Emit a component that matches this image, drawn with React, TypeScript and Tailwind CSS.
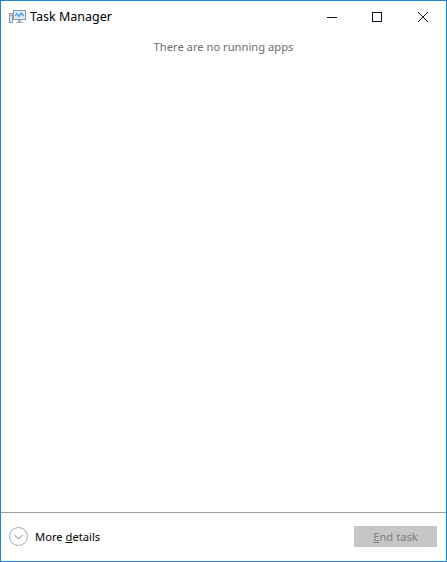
export default function App() {
  return (
    <div className="w-[447px] h-[562px] flex flex-col bg-white border border-[#1a85d6] font-['Noto_Sans',sans-serif] overflow-hidden">
      <div className="h-[30px] flex items-center shrink-0 pt-[2px]">
        <svg className="ml-[8px] w-[17px] h-[16px]" viewBox="0 0 17 16">
          <rect x="0.5" y="4.5" width="3" height="9" fill="#e4e6e8" stroke="#8f969c" />
          <rect x="1.5" y="6" width="1" height="1" fill="#c0504d" />
          <rect x="4.5" y="1.5" width="12" height="9" fill="#d9ecfa" stroke="#8d99a3" />
          <path d="M6 7 L8 4.5 L10 7.5 L12 4 L15 7" fill="none" stroke="#4f9fe0" strokeWidth="1.2" />
          <path d="M9 11 h3 v2 h2 v1 h-7 v-1 h2z" fill="#a3adb5" />
        </svg>
        <span className="ml-[4px] text-[12.5px] text-black">Task Manager</span>
        <div className="ml-auto flex items-center mr-[15px]">
          <svg className="w-[16px] h-[16px]" viewBox="0 0 16 16"><path d="M3 8.5h10" stroke="#1b0c24" strokeWidth="1" /></svg>
          <svg className="ml-[29px] w-[16px] h-[16px]" viewBox="0 0 16 16"><rect x="3.5" y="3.5" width="9" height="9" fill="none" stroke="#1b0c24" /></svg>
          <svg className="ml-[30px] w-[16px] h-[16px]" viewBox="0 0 16 16"><path d="M3 3l10 10M13 3L3 13" stroke="#1b0c24" strokeWidth="1" /></svg>
        </div>
      </div>
      <div className="flex-1 flex justify-center pt-[8px] text-[11.2px] text-[#6d6d6d]">
        <span className="h-[20px]">There are no running apps</span>
      </div>
      <div className="h-[49px] shrink-0 border-t border-[#a0a0a0] flex items-center justify-between pl-[8px] pr-[9px] pb-[1px]">
        <div className="flex items-center gap-[7px]">
          <svg className="w-[19px] h-[19px]" viewBox="0 0 19 19">
            <circle cx="9.5" cy="9.5" r="9" fill="none" stroke="#a5b0b8" />
            <path d="M5.5 8l4 4 4-4" fill="none" stroke="#7b8790" />
          </svg>
          <span className="text-[11.2px] text-black pt-[1px]">More <span className="underline">d</span>etails</span>
        </div>
        <div className="w-[83px] h-[21px] bg-[#c6c6c6] flex items-center justify-center text-[11.2px] text-[#7f7f7f]">
          <span className="pt-[1px]"><span className="underline">E</span>nd task</span>
        </div>
      </div>
    </div>
  );
}
